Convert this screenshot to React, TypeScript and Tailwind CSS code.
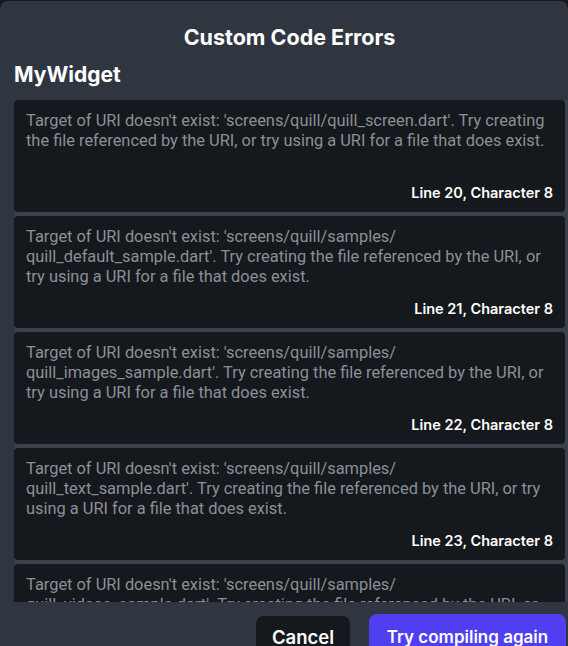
import React from "react";

const errors = [
  {
    msg: "Target of URI doesn't exist: 'screens/quill/quill_screen.dart'. Try creating the file referenced by the URI, or try using a URI for a file that does exist.",
    line: 20,
  },
  {
    msg: "Target of URI doesn't exist: 'screens/quill/samples/ quill_default_sample.dart'. Try creating the file referenced by the URI, or try using a URI for a file that does exist.",
    line: 21,
  },
  {
    msg: "Target of URI doesn't exist: 'screens/quill/samples/ quill_images_sample.dart'. Try creating the file referenced by the URI, or try using a URI for a file that does exist.",
    line: 22,
  },
  {
    msg: "Target of URI doesn't exist: 'screens/quill/samples/ quill_text_sample.dart'. Try creating the file referenced by the URI, or try using a URI for a file that does exist.",
    line: 23,
  },
  {
    msg: "Target of URI doesn't exist: 'screens/quill/samples/ quill_videos_sample.dart'. Try creating the file referenced by the URI, or try using a URI for a file that does exist.",
    line: 24,
  },
];

export default function App() {
  return (
    <div className="h-[646px] w-[568px] overflow-hidden bg-[#15181c] pt-[1px]">
      <div className="flex h-[700px] flex-col rounded-t-[8px] bg-[#30363f] pl-[14px] font-['Inter',sans-serif]">
        <div className="pr-[3px] pt-[22px] text-center text-[21.5px] font-bold leading-[28px] text-white">
          Custom Code Errors
        </div>
        <div className="mt-[10px] text-[21px] font-bold leading-[28px] text-white">MyWidget</div>
        <div className="mt-[11px] flex h-[502px] flex-col gap-[4px] overflow-hidden bg-[#3a414b] pr-[3px]">
          {errors.map((e) => (
            <div
              key={e.line}
              className="flex h-[112px] shrink-0 flex-col justify-between rounded-[4px] bg-[#15181c] px-[12px] pb-[9px] pt-[11px]"
            >
              <div className="font-['Roboto',sans-serif] text-[16.4px] leading-[20px] text-[#8b9096]">{e.msg}</div>
              <div className="text-right text-[14.5px] font-semibold leading-[20px] text-white">
                Line {e.line}, Character 8
              </div>
            </div>
          ))}
        </div>
        <div className="mt-[12px] flex justify-end gap-[19px] pr-[2px]">
          <button className="mt-[2px] h-[44px] w-[94px] rounded-[8px] bg-[#15181c] text-[18.5px] font-semibold text-white">
            Cancel
          </button>
          <button className="h-[48px] w-[197px] rounded-[8px] bg-[#4f3ff0] text-[17px] font-semibold text-white">
            Try compiling again
          </button>
        </div>
      </div>
    </div>
  );
}
